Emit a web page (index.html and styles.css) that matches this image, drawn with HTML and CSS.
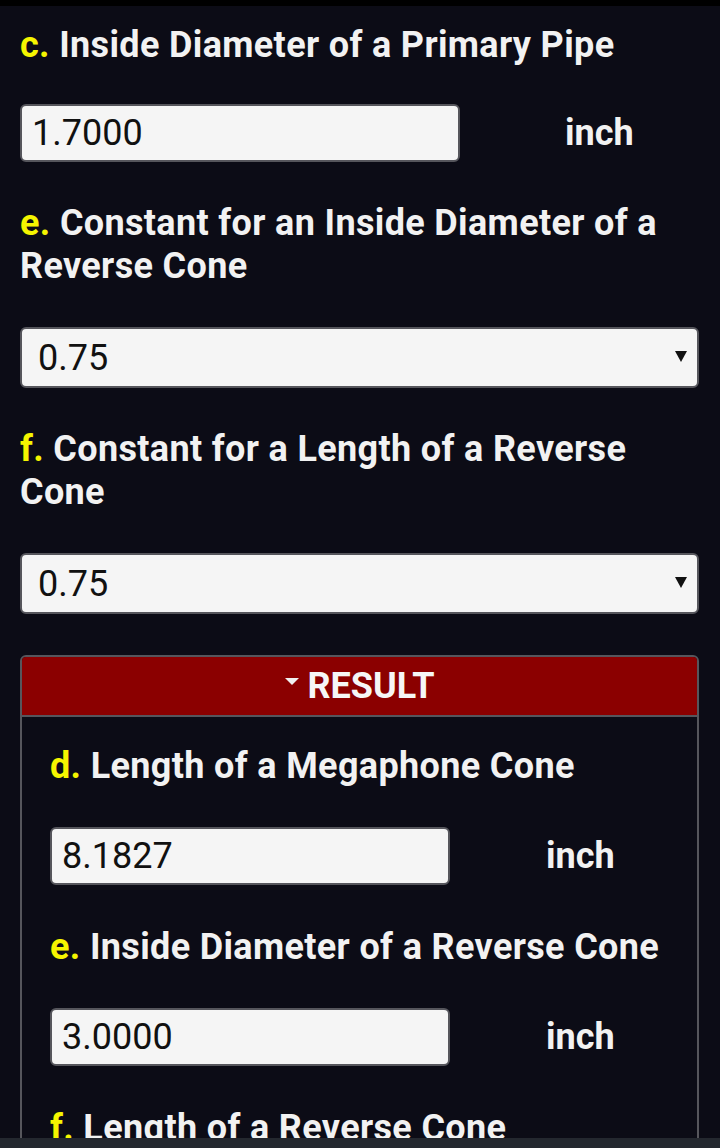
FILE: index.html
```html
<!DOCTYPE html>
<html>
<head>
<meta charset="utf-8">
<link rel="stylesheet" href="styles.css">
</head>
<body>
<div class="topbar"></div>
<main class="page">
  <div class="field first">
    <div class="label"><span class="key">c.</span> Inside Diameter of a Primary Pipe</div>
    <div class="row">
      <div class="input">1.7000</div>
      <div class="unit">inch</div>
    </div>
  </div>
  <div class="field">
    <div class="label"><span class="key">e.</span> Constant for an Inside Diameter of a Reverse Cone</div>
    <div class="select"><span>0.75</span><span class="arrow"></span></div>
  </div>
  <div class="field after-select">
    <div class="label"><span class="key">f.</span> Constant for a Length of a Reverse Cone</div>
    <div class="select"><span>0.75</span><span class="arrow"></span></div>
  </div>
  <section class="result">
    <div class="result-head"><span class="tri"></span>RESULT</div>
    <div class="result-body">
      <div class="field first">
        <div class="label"><span class="key">d.</span> Length of a Megaphone Cone</div>
        <div class="row">
          <div class="input">8.1827</div>
          <div class="unit">inch</div>
        </div>
      </div>
      <div class="field">
        <div class="label"><span class="key">e.</span> Inside Diameter of a Reverse Cone</div>
        <div class="row">
          <div class="input">3.0000</div>
          <div class="unit">inch</div>
        </div>
      </div>
      <div class="field">
        <div class="label"><span class="key">f.</span> Length of a Reverse Cone</div>
      </div>
    </div>
  </section>
</main>
<div class="bottombar"></div>
</body>
</html>
```

FILE: styles.css
```css
html, body {
  margin: 0;
  padding: 0;
  background: #0c0c16;
  font-family: Roboto, "Liberation Sans", sans-serif;
  color: #f2f2f2;
  overflow: hidden;
  height: 1148px;
}
.topbar {
  height: 6px;
  background: #000;
}
.page {
  padding: 0 21px 0 20px;
}
.field {
  display: flex;
  flex-direction: column;
  padding-top: 40px;
}
.field.first {
  padding-top: 18px;
}
.field.after-select {
  padding-top: 40px;
}
.label {
  font-weight: bold;
  font-size: 36px;
  line-height: 43px;
  letter-spacing: 0.35px;
  color: #f2f2f2;
}
.key {
  color: #f5f500;
}
.row {
  display: flex;
  align-items: center;
  margin-top: 37px;
}
.input {
  box-sizing: border-box;
  width: 440px;
  height: 58px;
  background: #f5f5f5;
  border: 2px solid #56565c;
  border-radius: 6px;
  color: #111;
  font-size: 36px;
  line-height: 54px;
  padding-left: 10px;
}
.unit {
  font-weight: bold;
  font-size: 36px;
  padding-left: 105px;
}
.select {
  box-sizing: border-box;
  height: 61px;
  margin-top: 39px;
  background: #f5f5f5;
  border: 2px solid #56565c;
  border-radius: 6px;
  color: #111;
  font-size: 36px;
  padding: 0 10px 0 16px;
  display: flex;
  align-items: center;
  justify-content: space-between;
}
.arrow {
  width: 0;
  height: 0;
  border-left: 6px solid transparent;
  border-right: 6px solid transparent;
  border-top: 11px solid #111;
  margin-top: -3px;
}
.result {
  margin-top: 41px;
  border: 2px solid #56565c;
  border-radius: 6px 6px 0 0;
  overflow: hidden;
}
.result-head {
  background: #8b0000;
  height: 58px;
  border-bottom: 2px solid #56565c;
  display: flex;
  align-items: center;
  justify-content: center;
  font-weight: bold;
  font-size: 36px;
  color: #f6f6f6;
}
.tri {
  width: 0;
  height: 0;
  border-left: 7px solid transparent;
  border-right: 7px solid transparent;
  border-top: 7px solid #f0f0f0;
  margin-right: 9px;
  margin-top: -9px;
}
.result-body {
  padding: 11px 28px 40px 28px;
}
.result-body .field {
  padding-top: 41px;
}
.result-body .field.first {
  padding-top: 17px;
}
.result-body .row {
  margin-top: 39px;
}
.result-body .input {
  width: 400px;
}
.result-body .unit {
  padding-left: 96px;
}
.bottombar {
  position: fixed;
  left: 0;
  right: 0;
  bottom: 0;
  height: 10px;
  background: #24282f;
}
```
